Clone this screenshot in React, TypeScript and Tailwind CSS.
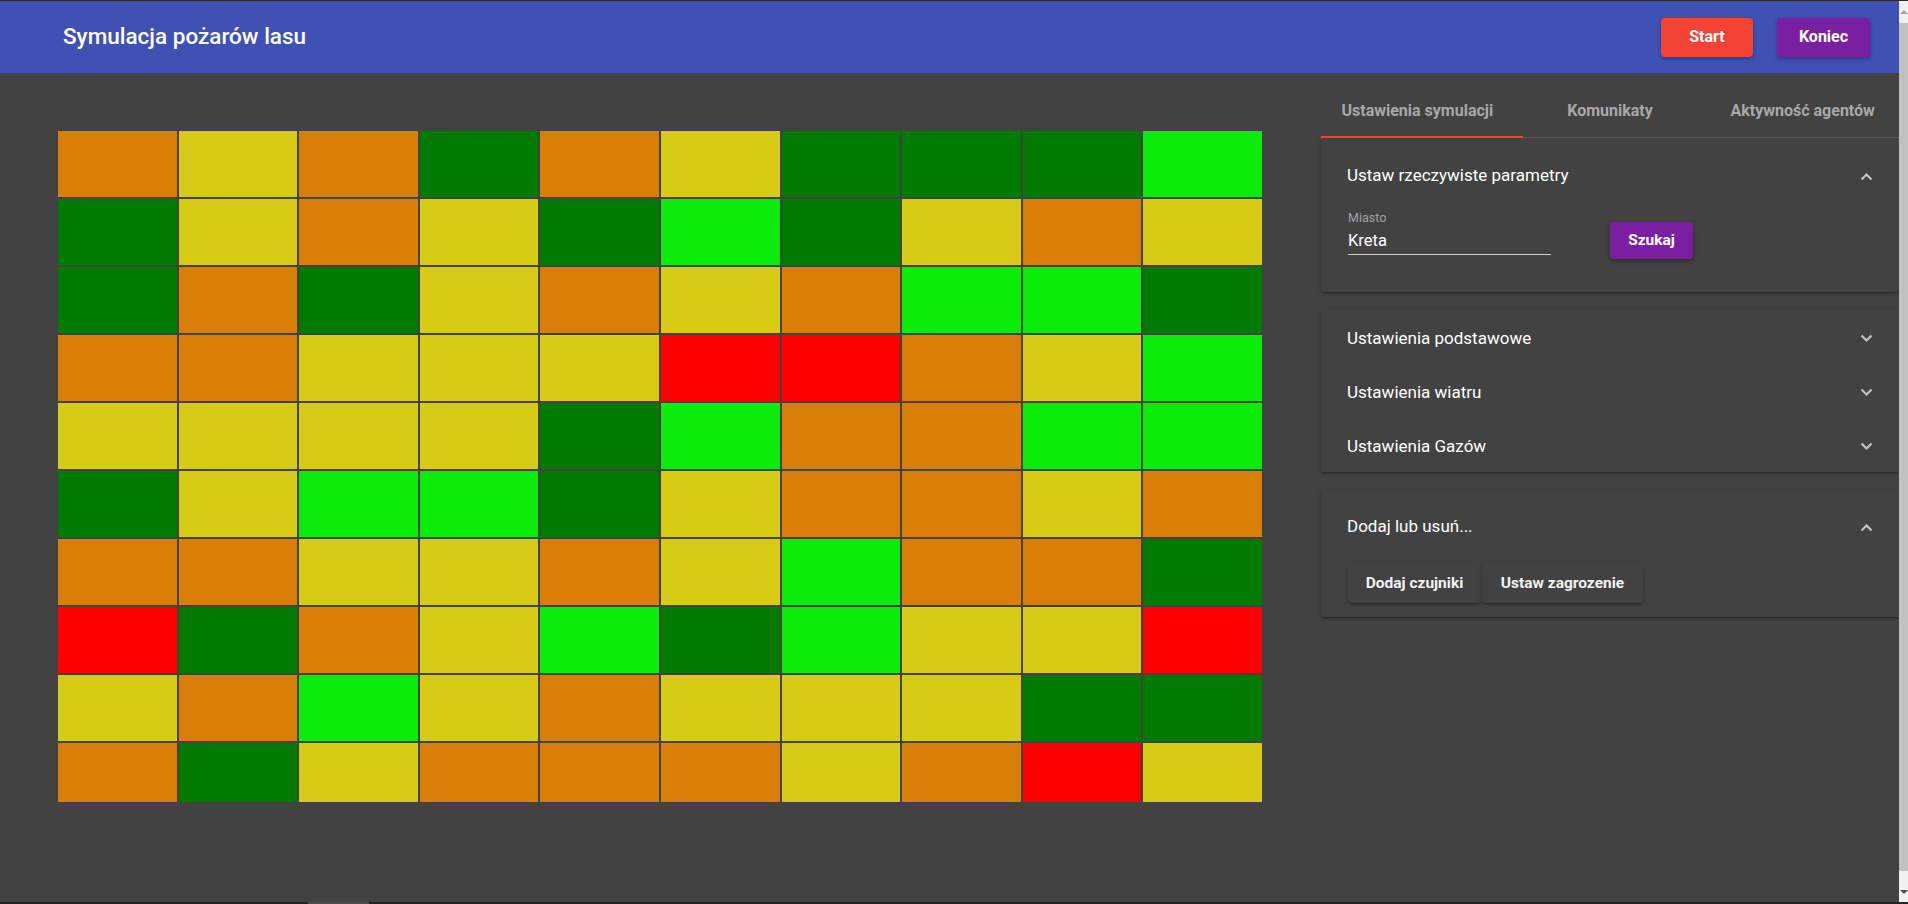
import React from "react";

const C: Record<string, string> = {
  O: "bg-[#d97e07]",
  Y: "bg-[#d8cb15]",
  G: "bg-[#007b00]",
  L: "bg-[#0bec0b]",
  R: "bg-[#ff0000]",
};

const rows = [
  "OYOGOYGGGL",
  "GYOYGLGYOY",
  "GOGYOYOLLG",
  "OOYYYRROYL",
  "YYYYGLOOLL",
  "GYLLGYOOYO",
  "OOYYOYLOOG",
  "RGOYLGLYYR",
  "YOLYOYYYGG",
  "OGYOOOYORY",
];

function Chevron({ up }: { up?: boolean }) {
  return (
    <svg width="13" height="9" viewBox="0 0 13 9" className="block">
      {up ? (
        <polyline points="1.5,7.5 6.5,2.5 11.5,7.5" fill="none" stroke="#c4c4c4" strokeWidth="2.2" />
      ) : (
        <polyline points="1.5,1.5 6.5,6.5 11.5,1.5" fill="none" stroke="#c4c4c4" strokeWidth="2.2" />
      )}
    </svg>
  );
}

function RaisedBtn({ label, w }: { label: string; w: string }) {
  return (
    <button
      className={`${w} h-[39px] rounded-[4px] bg-[#424242] text-[15.5px] font-bold text-[#f2f2f2] shadow-[0_3px_1px_-2px_rgba(0,0,0,0.2),0_2px_2px_0_rgba(0,0,0,0.14),0_1px_5px_0_rgba(0,0,0,0.12)]`}
    >
      {label}
    </button>
  );
}

const panelShadow =
  "shadow-[0_3px_1px_-2px_rgba(0,0,0,0.2),0_2px_2px_0_rgba(0,0,0,0.14),0_1px_5px_0_rgba(0,0,0,0.12)]";

export default function App() {
  return (
    <div className="w-[1908px] h-[904px] flex flex-col overflow-hidden bg-[#424242] font-[Roboto,sans-serif]">
      <div className="h-px bg-[#2b2b2b]" />
      <div className="flex-1 flex min-h-0">
        <div className="w-[1899px] flex flex-col">
          {/* Header */}
          <div className="h-[72px] bg-[#3f51b5] flex items-center pl-[63px] pr-[29px]">
            <div className="text-[22.5px] font-medium text-white">Symulacja pożarów lasu</div>
            <div className="flex-1" />
            <div className="flex gap-[24px]">
              <button className="w-[92px] h-[39px] rounded-[4px] bg-[#f44336] text-white text-[16px] font-bold shadow-[0_2px_4px_rgba(0,0,0,0.3)]">
                Start
              </button>
              <button className="w-[93px] h-[39px] rounded-[4px] bg-[#7b1fa2] text-white text-[16px] font-bold shadow-[0_2px_4px_rgba(0,0,0,0.3)]">
                Koniec
              </button>
            </div>
          </div>
          {/* Body */}
          <div className="flex-1 flex">
            <div className="pl-[58px] pt-[58px]">
              <div className="w-[1204px] h-[671px] overflow-hidden">
                <div className="grid grid-cols-10 gap-[2px]">
                  {rows.flatMap((r, i) =>
                    r.split("").map((c, j) => (
                      <div key={`${i}-${j}`} className={`h-[66px] ${C[c]}`} />
                    ))
                  )}
                </div>
              </div>
            </div>
            <div className="ml-[59px] w-[578px] flex flex-col">
              {/* Tabs */}
              <div className="relative h-[65px] border-b border-[#5c5c5c] flex items-end">
                {["Ustawienia symulacji", "Komunikaty", "Aktywność agentów"].map((t) => (
                  <div
                    key={t}
                    className="flex-1 h-[52px] flex items-center justify-center text-[16px] font-bold text-[#a8a8a8]"
                  >
                    {t}
                  </div>
                ))}
                <div className="absolute left-0 bottom-[-1px] w-[202px] h-[2px] bg-[#f44336]" />
              </div>
              {/* Panel 1 */}
              <div className={`bg-[#424242] rounded-b-[4px] ${panelShadow}`}>
                <div className="h-[72px] flex items-center justify-between pl-[26px] pr-[26px] pt-[4px]">
                  <span className="text-[17px] text-white">Ustaw rzeczywiste parametry</span>
                  <Chevron up />
                </div>
                <div className="h-[82px] pl-[27px] flex items-start">
                  <div className="w-[203px] pt-[1px]">
                    <div className="h-[14px] text-[12.5px] leading-[14px] text-[#a0a0a0]">Miasto</div>
                    <div className="pt-[3px] h-[30px] leading-[26px] text-[16.5px] text-white border-b border-[#cfcfcf]">
                      Kreta
                    </div>
                  </div>
                  <button className="ml-[59px] mt-[12px] w-[83px] h-[37px] rounded-[4px] bg-[#7b1fa2] text-white text-[15.5px] font-bold shadow-[0_2px_4px_rgba(0,0,0,0.35)]">
                    Szukaj
                  </button>
                </div>
              </div>
              {/* Group */}
              <div className={`mt-[18px] bg-[#424242] ${panelShadow}`}>
                {["Ustawienia podstawowe", "Ustawienia wiatru", "Ustawienia Gazów"].map((t) => (
                  <div key={t} className="h-[54px] flex items-center justify-between pl-[26px] pr-[26px] pt-[3px]">
                    <span className="text-[17px] text-white">{t}</span>
                    <Chevron />
                  </div>
                ))}
              </div>
              {/* Panel 3 */}
              <div className={`mt-[18px] bg-[#424242] ${panelShadow}`}>
                <div className="h-[74px] flex items-center justify-between pl-[26px] pr-[26px]">
                  <span className="text-[17px] text-white">Dodaj lub usuń...</span>
                  <Chevron up />
                </div>
                <div className="pl-[27px] pb-[14px] flex gap-[1px]">
                  <RaisedBtn label="Dodaj czujniki" w="w-[133px]" />
                  <RaisedBtn label="Ustaw zagrozenie" w="w-[161px]" />
                </div>
              </div>
            </div>
          </div>
        </div>
        {/* Scrollbar */}
        <div className="w-[9px] flex flex-col bg-[#f1f1f1]">
          <div className="h-[22px] flex items-center justify-start pl-[1px]">
            <div className="w-0 h-0 border-l-[4px] border-r-[4px] border-b-[4px] border-l-transparent border-r-transparent border-b-[#a3a3a3]" />
          </div>
          <div className="flex-1 bg-[#c1c1c1]" />
          <div className="h-[31px] flex items-end pb-[8px] pl-[1px]">
            <div className="w-0 h-0 border-l-[4px] border-r-[4px] border-t-[4px] border-l-transparent border-r-transparent border-t-[#505050]" />
          </div>
        </div>
      </div>
      <div className="h-[2px] bg-[#262220] flex">
        <div className="ml-[308px] w-[61px] bg-[#4d4d4d]" />
      </div>
    </div>
  );
}
